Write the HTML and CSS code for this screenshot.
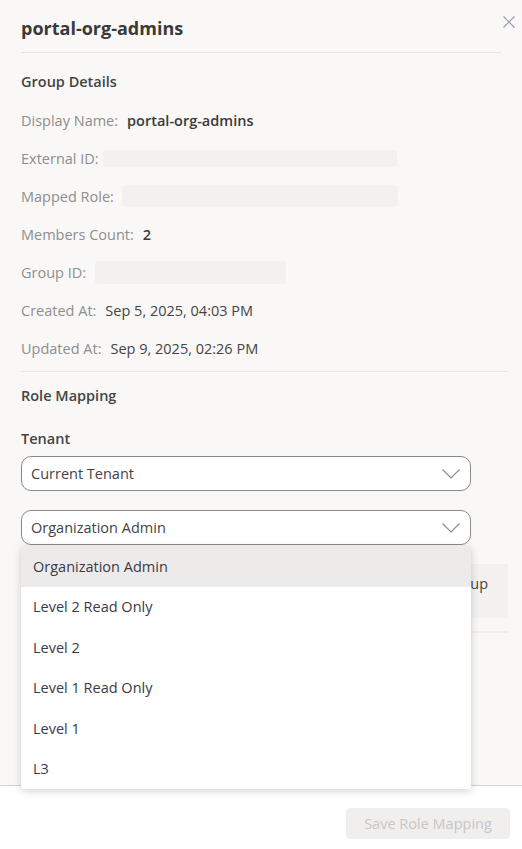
FILE: index.html
```html
<!DOCTYPE html>
<html lang="en">
<head>
    <meta charset="UTF-8">
    <meta name="viewport" content="width=device-width, initial-scale=1.0">
    <title>portal-org-admins</title>
    <link rel="stylesheet" href="styles.css">
</head>
<body>
    <div class="panel">
        <div class="panel-body">
            <div class="panel-header">
                <h2>portal-org-admins</h2>
                <button class="close-btn" aria-label="Close">
                    <svg width="12" height="12" viewBox="0 0 12 12"><path d="M0.5 0.5 L11.5 11.5 M11.5 0.5 L0.5 11.5" stroke="#8e9db3" stroke-width="1.1" fill="none"/></svg>
                </button>
            </div>

            <h3 class="section-title">Group Details</h3>
            <div class="details">
                <div class="row"><span class="label">Display Name:</span><span class="value strong">portal-org-admins</span></div>
                <div class="row"><span class="label">External ID:</span><span class="blank blank-ext"></span></div>
                <div class="row"><span class="label">Mapped Role:</span><span class="blank blank-role"></span></div>
                <div class="row"><span class="label">Members Count:</span><span class="value medium">2</span></div>
                <div class="row"><span class="label">Group ID:</span><span class="blank blank-id"></span></div>
                <div class="row"><span class="label">Created At:</span><span class="value">Sep 5, 2025, 04:03 PM</span></div>
                <div class="row"><span class="label">Updated At:</span><span class="value">Sep 9, 2025, 02:26 PM</span></div>
            </div>

            <div class="divider"></div>

            <h3 class="section-title mapping-title">Role Mapping</h3>
            <label class="field-label">Tenant</label>
            <div class="select">
                <span>Current Tenant</span>
                <svg class="chevron" width="18" height="10" viewBox="0 0 18 10"><path d="M0.5 0.5 L9 9 L17.5 0.5" stroke="#8a8a8a" stroke-width="1.1" fill="none"/></svg>
            </div>

            <div class="role-select">
                <div class="select">
                    <span>Organization Admin</span>
                    <svg class="chevron" width="18" height="10" viewBox="0 0 18 10"><path d="M0.5 0.5 L9 9 L17.5 0.5" stroke="#8a8a8a" stroke-width="1.1" fill="none"/></svg>
                </div>
                <ul class="menu">
                    <li class="active">Organization Admin</li>
                    <li>Level 2 Read Only</li>
                    <li>Level 2</li>
                    <li>Level 1 Read Only</li>
                    <li>Level 1</li>
                    <li>L3</li>
                </ul>
            </div>

            <div class="info-box"><span class="info-line">The selected role will be assigned to all members of this group</span></div>
            <div class="divider light"></div>
        </div>

        <div class="panel-footer">
            <button class="save-btn" disabled>Save Role Mapping</button>
        </div>
    </div>
</body>
</html>
```

FILE: styles.css
```css
body {
    margin: 0;
    font-family: "Open Sans", "Noto Sans", sans-serif;
    color: #333;
    background: #fff;
}

.panel {
    height: 100vh;
    display: flex;
    flex-direction: column;
}

.panel-body {
    flex: 1;
    background-color: #f9f8f7;
    padding: 0 14px 0 21px;
}

.panel-header {
    display: flex;
    justify-content: space-between;
    align-items: flex-start;
    padding: 16px 0 12px;
    margin-right: 7px;
    border-bottom: 1px solid #e6e4e2;
}

.panel-header h2 {
    margin: 0;
    font-size: 18px;
    line-height: 24px;
    font-weight: 700;
    color: #3a3a3a;
}

.close-btn {
    background: none;
    border: none;
    padding: 0;
    margin: 0 -14px 0 0;
    cursor: pointer;
    line-height: 0;
}

.section-title {
    margin: 19px 0 0;
    font-size: 14.5px;
    line-height: 20px;
    font-weight: 600;
    color: #444;
}

.details {
    margin-top: 9px;
}

.row {
    height: 38px;
    display: flex;
    align-items: center;
    font-size: 14.5px;
}

.label {
    color: #8e8e8e;
    margin-right: 9px;
}

.value {
    color: #444;
}

.value.strong {
    font-weight: 600;
    color: #3a3a3a;
}

.value.medium {
    font-weight: 600;
    color: #3a3a3a;
}

.blank {
    display: inline-block;
    background-color: #f2f1f0;
    border-radius: 3px;
}

.blank-ext {
    width: 294px;
    height: 17px;
    margin-left: -5px;
}

.blank-role {
    width: 276px;
    height: 22px;
    margin-left: -1px;
}

.blank-id {
    width: 191px;
    height: 23px;
}

.divider {
    height: 1px;
    background-color: #e9e7e5;
    margin-top: 4px;
}

.mapping-title {
    margin-top: 14px;
}

.field-label {
    display: block;
    margin-top: 23px;
    font-size: 14.5px;
    line-height: 20px;
    font-weight: 600;
    color: #444;
}

.select {
    width: 450px;
    height: 35px;
    box-sizing: border-box;
    margin-top: 7px;
    padding: 0 10px 0 9px;
    display: flex;
    align-items: center;
    justify-content: space-between;
    background-color: #fff;
    border: 1px solid #8a8a8a;
    border-radius: 10px;
    font-size: 14.5px;
    color: #444;
}

.role-select {
    position: relative;
    margin-top: 19px;
}

.role-select .select {
    margin-top: 0;
}

.menu {
    position: absolute;
    top: 36px;
    left: 0;
    width: 450px;
    margin: 0;
    padding: 0;
    list-style: none;
    background-color: #fff;
    border-radius: 4px;
    box-shadow: 0 2px 8px rgba(0, 0, 0, 0.18);
    overflow: hidden;
    z-index: 10;
}

.menu li {
    height: 40.5px;
    display: flex;
    align-items: center;
    padding-left: 12px;
    font-size: 14.5px;
    color: #3a3a48;
}

.menu li.active {
    background-color: #ecebea;
}

.info-box {
    margin-top: 19px;
    height: 54px;
    box-sizing: border-box;
    padding: 10px 20px 0 0;
    background-color: #f2f1f0;
    font-size: 14.5px;
    line-height: 20px;
    color: #444;
    display: flex;
    justify-content: flex-end;
    overflow: hidden;
}

.info-line {
    white-space: nowrap;
}

.divider.light {
    margin-top: 13px;
    height: 2px;
    background-color: #f0efee;
}

.panel-footer {
    height: 64px;
    box-sizing: border-box;
    border-top: 1px solid #d2d2d2;
    display: flex;
    justify-content: flex-end;
    align-items: flex-start;
    padding: 22px 12px 0 0;
    background-color: #fff;
}

.save-btn {
    width: 164px;
    height: 31px;
    border: none;
    border-radius: 4px;
    background-color: #f1efee;
    color: #c6c6c6;
    font-family: inherit;
    font-size: 14.5px;
}
```
